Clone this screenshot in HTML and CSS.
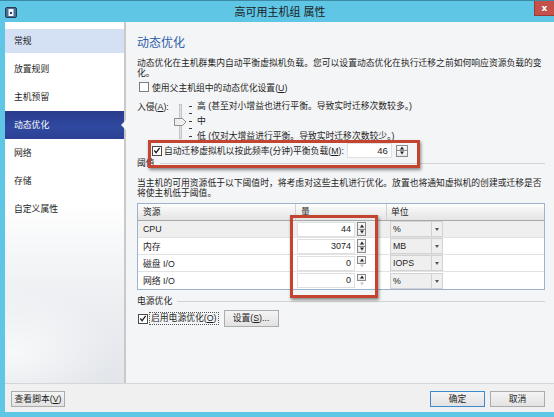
FILE: index.html
```html
<!DOCTYPE html>
<html lang="zh-CN">
<head>
<meta charset="utf-8">
<title>高可用主机组 属性</title>
<link rel="stylesheet" href="styles.css">
</head>
<body>
<div class="window">
  <div class="titlebar">
    <div class="tb-left">
      <svg class="appicon" width="12" height="11" viewBox="0 0 12 11">
        <rect x="0.5" y="0.5" width="11" height="10" rx="1.5" fill="#4d6e94" stroke="#243a55"/>
        <rect x="3.5" y="2" width="5" height="7" fill="#f4f7fb"/>
        <rect x="5" y="5" width="2" height="2" fill="#2b3f5c"/>
      </svg>
    </div>
    <div class="title">高可用主机组 属性</div>
    <div class="tb-right"><div class="close">x</div></div>
  </div>

  <div class="main">
    <nav class="sidebar">
      <div class="nav-item hover">常规</div>
      <div class="nav-item">放置规则</div>
      <div class="nav-item">主机预留</div>
      <div class="nav-item active">动态优化</div>
      <div class="nav-item">网络</div>
      <div class="nav-item">存储</div>
      <div class="nav-item">自定义属性</div>
    </nav>

    <section class="content">
      <h1 class="heading">动态优化</h1>
      <p class="desc">动态优化在主机群集内自动平衡虚拟机负载。您可以设置动态优化在执行迁移之前如何响应资源负载的变<br>化。</p>

      <div class="check-row">
        <span class="cb"></span>
        <span>使用父主机组中的动态优化设置(<u>U</u>)</span>
      </div>

      <div class="aggr">
        <div class="aggr-label">入侵(<u>A</u>):</div>
        <div class="slider">
          <span class="track"></span>
          <svg class="thumb" width="13" height="8" viewBox="0 0 13 8">
            <path d="M0.5 0.5 H8.5 L12 4 L8.5 7.5 H0.5 Z" fill="#eeeeee" stroke="#8e8e8e"/>
          </svg>
        </div>
        <div class="ticks">
          <div class="tk"><i class="mark"></i><span>高 (甚至对小增益也进行平衡。导致实时迁移次数较多。)</span></div>
          <div class="tk"><i class="mark"></i></div>
          <div class="tk"><i class="mark"></i><span>中</span></div>
          <div class="tk"><i class="mark"></i></div>
          <div class="tk"><i class="mark"></i><span>低 (仅对大增益进行平衡。导致实时迁移次数较少。)</span></div>
        </div>
      </div>

      <div class="auto-row">
        <span class="cb checked"><svg width="9" height="9" viewBox="0 0 9 9"><path d="M1.5 4.5 L3.5 7 L7.5 1.5" fill="none" stroke="#1a1a1a" stroke-width="1.4"/></svg></span>
        <span class="auto-text">自动迁移虚拟机以按此频率(分钟)平衡负载(<u>M</u>):</span>
        <span class="num big">46</span>
        <span class="spin big"><i class="up"></i><i class="down"></i></span>
      </div>

      <div class="group-head"><span>阈值</span><i class="gline"></i></div>
      <p class="desc2">当主机的可用资源低于以下阈值时，将考虑对这些主机进行优化。放置也将通知虚拟机的创建或迁移是否<br>将使主机低于阈值。</p>

      <div class="tbl">
        <div class="tr th">
          <div class="td">资源</div>
          <div class="td">量</div>
          <div class="td">单位</div>
        </div>
        <div class="tr sel">
          <div class="td">CPU</div>
          <div class="td qty"><span class="num">44</span><span class="spin"><i class="up"></i><i class="down"></i></span></div>
          <div class="td"><span class="combo"><span class="cv">%</span><span class="ca"></span></span></div>
        </div>
        <div class="tr">
          <div class="td">内存</div>
          <div class="td qty"><span class="num">3074</span><span class="spin"><i class="up"></i><i class="down"></i></span></div>
          <div class="td"><span class="combo"><span class="cv">MB</span><span class="ca"></span></span></div>
        </div>
        <div class="tr">
          <div class="td">磁盘 I/O</div>
          <div class="td qty"><span class="num">0</span><span class="spin"><i class="up"></i><i class="down off"></i></span></div>
          <div class="td"><span class="combo"><span class="cv">IOPS</span><span class="ca"></span></span></div>
        </div>
        <div class="tr">
          <div class="td">网络 I/O</div>
          <div class="td qty"><span class="num">0</span><span class="spin"><i class="up"></i><i class="down off"></i></span></div>
          <div class="td"><span class="combo"><span class="cv">%</span><span class="ca"></span></span></div>
        </div>
      </div>

      <div class="group-head g2"><span>电源优化</span><i class="gline"></i></div>
      <div class="power-row">
        <span class="cb checked"><svg width="9" height="9" viewBox="0 0 9 9"><path d="M1.5 4.5 L3.5 7 L7.5 1.5" fill="none" stroke="#1a1a1a" stroke-width="1.4"/></svg></span>
        <span class="focus">启用电源优化(<u>O</u>)</span>
        <span class="btn settings">设置(<u>S</u>)...</span>
      </div>
    </section>
  </div>

  <div class="footer">
    <span class="btn script">查看脚本(<u>V</u>)</span>
    <span class="spacer"></span>
    <span class="btn ok">确定</span>
    <span class="btn cancel">取消</span>
  </div>

  <div class="annot a1"></div>
  <div class="annot a2"></div>
</div>
</body>
</html>
```

FILE: styles.css
```css
* { box-sizing: border-box; margin: 0; padding: 0; }
html, body { width: 554px; height: 417px; overflow: hidden; }
body {
  font-family: "Liberation Sans", "Noto Sans CJK SC", sans-serif;
  font-size: 8.8px;
  color: #1e1e1e;
}
u { text-decoration: underline; text-underline-offset: 1px; }

.window {
  position: relative;
  width: 554px;
  height: 417px;
  background: #5fc6e6;
  display: flex;
  flex-direction: column;
}

/* title bar */
.titlebar {
  height: 22px;
  flex: none;
  display: grid;
  grid-template-columns: 1fr auto 1fr;
  align-items: center;
  padding-left: 6px;
  border-top: 1px solid #3b8aa6;
}
.tb-left { display: flex; align-items: center; margin-left: -1px; padding-top: 2px; }
.appicon { display: block; }
.title { font-size: 11px; line-height: 14px; color: #1b1b1b; padding-top: 1px; }
.tb-right { align-self: start; display: flex; justify-content: flex-end; }
.close {
  width: 20px;
  height: 15px;
  background: #c4514a;
  color: #fff;
  font-family: "DejaVu Sans", sans-serif;
  font-weight: bold;
  font-size: 9px;
  line-height: 14px;
  text-align: center;
  border-left: 1px solid #9b3a34;
  border-bottom: 1px solid #9b3a34;
}

/* main */
.main {
  flex: none;
  height: 361px;
  margin-left: 5px;
  display: flex;
}
.sidebar {
  width: 121px;
  flex: none;
  border-right: 2px solid #c9c9c9;
  padding-top: 5px;
  background:
    radial-gradient(ellipse 140px 90px at 10px 330px, rgba(255,255,255,0.7), rgba(255,255,255,0) 70%),
    linear-gradient(to bottom, #ffffff 0%, #ffffff 50%, #eef0f3 75%, #e2e5ea 100%);
}
.nav-item {
  height: 28px;
  line-height: 28px;
  padding-left: 9px;
  position: relative;
  color: #1e1e1e;
}
.nav-item.hover {
  background: linear-gradient(to bottom, transparent 2px, #d4e1f5 2px, #d4e1f5 26px, transparent 26px);
}
.nav-item.active {
  background: linear-gradient(to bottom, #2a3c8c 0%, #3049a0 60%, #2b3f93 100%);
  color: #ffffff;
}
.nav-item.active::after {
  content: "";
  position: absolute;
  right: -2px;
  top: 9px;
  border-style: solid;
  border-width: 5px 5px 5px 0;
  border-color: transparent #f4f5f6 transparent transparent;
}

.content {
  flex: 1;
  background: #f4f5f6;
  padding: 0 9px 0 11px;
  display: flex;
  flex-direction: column;
}
.heading {
  font-size: 12px;
  font-weight: normal;
  line-height: 16px;
  color: #2d5ca8;
  margin-top: 13px;
}
.desc, .desc2 {
  line-height: 10.5px;
  white-space: nowrap;
}
.desc { margin-top: 6.5px; }

.cb {
  width: 10px;
  height: 10px;
  border: 1px solid #7c7c7c;
  background: #ffffff;
  display: inline-flex;
  align-items: center;
  justify-content: center;
  flex: none;
}
.cb.checked { border-color: #4a4a4a; }
.cb svg { display: block; }

.check-row {
  margin-top: 2.5px;
  height: 12px;
  display: flex;
  align-items: center;
  gap: 3px;
  padding-left: 2px;
}

/* aggression slider */
.aggr {
  margin-top: 9.5px;
  display: flex;
  height: 37.5px;
}
.aggr-label { width: 37px; line-height: 7.5px; padding-top: 1px; }
.slider { width: 13px; position: relative; }
.track {
  position: absolute;
  left: 5px;
  top: 1px;
  width: 3px;
  height: 35px;
  background: #e4e4e4;
  border: 1px solid #c4c4c4;
}
.thumb { position: absolute; left: 0; top: 15px; display: block; }
.ticks { margin-left: 2px; white-space: nowrap; }
.tk {
  height: 7.5px;
  line-height: 7.5px;
  display: flex;
  align-items: center;
}
.mark {
  width: 3px;
  height: 1px;
  background: #3a3a3a;
  flex: none;
}
.tk span { margin-left: 5px; padding-top: 1px; }

/* auto migrate row */
.auto-row {
  margin-top: 3px;
  height: 15px;
  display: flex;
  align-items: center;
  padding-left: 15px;
  gap: 2px;
}
.auto-text { margin-right: 1px; }

.num {
  background: #ffffff;
  border: 1px solid #e0e0e0;
  text-align: right;
  padding-right: 3px;
  display: block;
  flex: none;
}
.num.big { width: 45px; height: 15px; line-height: 13px; font-size: 9.5px; }

.spin {
  display: flex;
  flex-direction: column;
  flex: none;
  width: 9px;
  height: 14px;
  margin-left: 2px;
}
.spin i {
  flex: 1;
  position: relative;
  border: 1px solid #8a8a8a;
  background: linear-gradient(#fbfbfb, #e6e6e6);
}
.spin i + i { border-top: none; }
.spin i::after {
  content: "";
  position: absolute;
  left: 50%;
  top: 50%;
  transform: translate(-50%, -50%);
  border-left: 2.5px solid transparent;
  border-right: 2.5px solid transparent;
}
.spin .up::after { border-bottom: 3px solid #222; }
.spin .down::after { border-top: 3px solid #222; }
.spin .down.off { border-color: transparent; background: none; }
.spin .down.off::after { border-top-color: #c4c4c4; }
.spin.big { width: 12px; height: 12px; margin-left: 2px; }

/* group heads */
.group-head {
  display: flex;
  align-items: center;
  line-height: 11px;
  height: 11px;
}
.gline { flex: 1; height: 1px; background: #d4d4d4; margin-left: 5px; font-style: normal; }
.g2 { margin-top: 5.5px; }

.desc2 { margin-top: 8.5px; }

/* table */
.tbl {
  margin-top: 4.5px;
  border: 1px solid #9db2cd;
  background: #ffffff;
}
.tr {
  display: grid;
  grid-template-columns: 158px 91px 1fr;
  height: 17px;
  border-bottom: 1px solid #e2e2e2;
}
.tr:last-child { border-bottom: none; }
.tr.th {
  background: linear-gradient(#fdfdfd, #e4e4e4);
  border-bottom: 1px solid #a9a9a9;
}
.tr.th .td { border-right: 1px solid #d2d2d2; line-height: 16px; padding-left: 5px; }
.tr.th .td:last-child { border-right: none; padding-left: 4px; }
.tr.sel { background: #efefef; }
.td {
  display: flex;
  align-items: center;
  padding-left: 5px;
  white-space: nowrap;
}
.td.qty { padding-left: 1px; }
.qty .num { width: 58px; height: 15px; line-height: 13px; font-size: 9px; }
.combo {
  margin-left: -2px;
  width: 53px;
  height: 16px;
  border: 1px solid #d2d2d2;
  background: #efefef;
  display: flex;
}
.cv { flex: 1; padding-left: 2px; line-height: 14px; }
.ca {
  width: 11px;
  border-left: 1px solid #d2d2d2;
  position: relative;
}
.ca::after {
  content: "";
  position: absolute;
  left: 3px;
  top: 6px;
  border-left: 2.5px solid transparent;
  border-right: 2.5px solid transparent;
  border-top: 3px solid #555;
}

/* power */
.power-row {
  margin-top: 3.5px;
  height: 17px;
  display: flex;
  align-items: center;
  padding-left: 1px;
}
.focus {
  margin-left: 2px;
  outline: 1px dotted #555;
  outline-offset: 0;
  line-height: 11px;
  padding: 0 1px;
}
.btn {
  display: inline-block;
  height: 16px;
  border: 1px solid #acacac;
  background: linear-gradient(#f4f4f4, #e2e2e2);
  line-height: 14px;
  text-align: center;
  white-space: nowrap;
}
.settings { margin-left: 6px; width: 55px; height: 17px; line-height: 15px; }

/* footer */
.footer {
  flex: none;
  height: 29px;
  margin-left: 5px;
  border-top: 1px solid #d6d6d6;
  background: #f0f0f0;
  display: flex;
  align-items: flex-start;
  padding: 7px 9px 0 6px;
}
.spacer { flex: 1; }
.script { width: 54px; }
.ok { width: 55px; border-color: #3d8ad0; }
.cancel { width: 55px; margin-left: 5px; }

/* annotation boxes */
.annot {
  position: absolute;
  border: 3px solid #c4452f;
  box-shadow: 1px 2px 3px rgba(0, 0, 0, 0.45);
  pointer-events: none;
}
.a1 { left: 148px; top: 140px; width: 272px; height: 28px; }
.a2 { left: 290px; top: 215px; width: 88px; height: 83px; }
```
